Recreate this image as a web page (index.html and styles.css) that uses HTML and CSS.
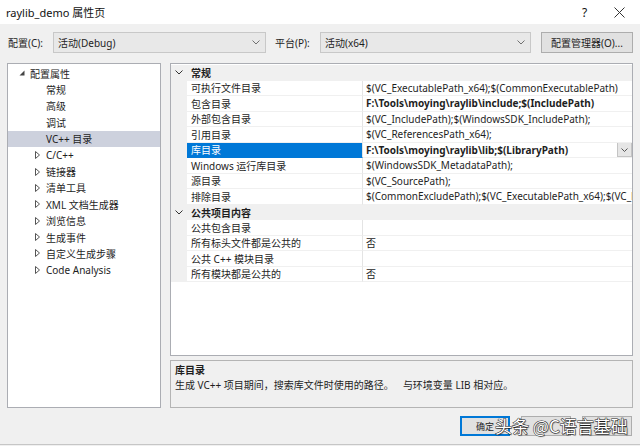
FILE: index.html
```html
<!DOCTYPE html>
<html lang="zh-CN">
<head>
<meta charset="utf-8">
<title>raylib_demo 属性页</title>
<link rel="stylesheet" href="styles.css">
</head>
<body>
<div class="window">
  <div class="titlebar">
    <span class="title">raylib_demo 属性页</span>
    <span class="tb-help">?</span>
    <span class="tb-close"><svg width="11" height="11" viewBox="0 0 11 11"><path d="M0.5 0.5L10.5 10.5M10.5 0.5L0.5 10.5" stroke="#333" stroke-width="1" fill="none"/></svg></span>
  </div>

  <div class="toolbar">
    <span class="lbl lbl-config">配置(C):</span>
    <div class="combo combo-config"><span class="combo-text">活动(Debug)</span><svg class="chev" width="8" height="5" viewBox="0 0 8 5"><path d="M0.5 0.5L4 4L7.5 0.5" stroke="#707070" fill="none"/></svg></div>
    <span class="lbl lbl-platform">平台(P):</span>
    <div class="combo combo-platform"><span class="combo-text">活动(x64)</span><svg class="chev" width="8" height="5" viewBox="0 0 8 5"><path d="M0.5 0.5L4 4L7.5 0.5" stroke="#707070" fill="none"/></svg></div>
    <div class="btn btn-manager">配置管理器(O)...</div>
  </div>

  <div class="main">
    <div class="tree">
      <div class="node root"><svg class="tw" width="6" height="6" viewBox="0 0 6 6"><polygon points="5.5,0.5 5.5,5.5 0.5,5.5" fill="#444"/></svg><span>配置属性</span></div>
      <div class="node leaf">常规</div>
      <div class="node leaf">高级</div>
      <div class="node leaf">调试</div>
      <div class="node leaf selected">VC++ 目录</div>
      <div class="node branch"><svg class="tw" width="5" height="8" viewBox="0 0 5 8"><polygon points="0.5,0.5 4.5,4 0.5,7.5" fill="none" stroke="#555"/></svg><span>C/C++</span></div>
      <div class="node branch"><svg class="tw" width="5" height="8" viewBox="0 0 5 8"><polygon points="0.5,0.5 4.5,4 0.5,7.5" fill="none" stroke="#555"/></svg><span>链接器</span></div>
      <div class="node branch"><svg class="tw" width="5" height="8" viewBox="0 0 5 8"><polygon points="0.5,0.5 4.5,4 0.5,7.5" fill="none" stroke="#555"/></svg><span>清单工具</span></div>
      <div class="node branch"><svg class="tw" width="5" height="8" viewBox="0 0 5 8"><polygon points="0.5,0.5 4.5,4 0.5,7.5" fill="none" stroke="#555"/></svg><span>XML 文档生成器</span></div>
      <div class="node branch"><svg class="tw" width="5" height="8" viewBox="0 0 5 8"><polygon points="0.5,0.5 4.5,4 0.5,7.5" fill="none" stroke="#555"/></svg><span>浏览信息</span></div>
      <div class="node branch"><svg class="tw" width="5" height="8" viewBox="0 0 5 8"><polygon points="0.5,0.5 4.5,4 0.5,7.5" fill="none" stroke="#555"/></svg><span>生成事件</span></div>
      <div class="node branch"><svg class="tw" width="5" height="8" viewBox="0 0 5 8"><polygon points="0.5,0.5 4.5,4 0.5,7.5" fill="none" stroke="#555"/></svg><span>自定义生成步骤</span></div>
      <div class="node branch"><svg class="tw" width="5" height="8" viewBox="0 0 5 8"><polygon points="0.5,0.5 4.5,4 0.5,7.5" fill="none" stroke="#555"/></svg><span>Code Analysis</span></div>
    </div>

    <div class="right">
      <div class="grid">
        <div class="cat"><span class="gut"><svg width="8" height="5" viewBox="0 0 8 5"><path d="M0.5 0.5L4 4L7.5 0.5" stroke="#333" fill="none"/></svg></span><span class="cat-name">常规</span></div>
        <div class="row"><span class="gut"></span><span class="name">可执行文件目录</span><span class="val"><span class="vt">$(VC_ExecutablePath_x64);$(CommonExecutablePath)</span></span></div>
        <div class="row"><span class="gut"></span><span class="name">包含目录</span><span class="val bold"><span class="vt">F:\Tools\moying\raylib\include;$(IncludePath)</span></span></div>
        <div class="row"><span class="gut"></span><span class="name">外部包含目录</span><span class="val"><span class="vt">$(VC_IncludePath);$(WindowsSDK_IncludePath);</span></span></div>
        <div class="row"><span class="gut"></span><span class="name">引用目录</span><span class="val"><span class="vt">$(VC_ReferencesPath_x64);</span></span></div>
        <div class="row sel"><span class="gut"></span><span class="name">库目录</span><span class="val bold"><span class="vt">F:\Tools\moying\raylib\lib;$(LibraryPath)</span><span class="dd"><svg width="7" height="4" viewBox="0 0 7 4"><path d="M0.5 0.5L3.5 3.5L6.5 0.5" stroke="#555" fill="none"/></svg></span></span></div>
        <div class="row"><span class="gut"></span><span class="name">Windows 运行库目录</span><span class="val"><span class="vt">$(WindowsSDK_MetadataPath);</span></span></div>
        <div class="row"><span class="gut"></span><span class="name">源目录</span><span class="val"><span class="vt">$(VC_SourcePath);</span></span></div>
        <div class="row"><span class="gut"></span><span class="name">排除目录</span><span class="val"><span class="vt">$(CommonExcludePath);$(VC_ExecutablePath_x64);$(VC_LibraryPath_x64);</span></span></div>
        <div class="cat"><span class="gut"><svg width="8" height="5" viewBox="0 0 8 5"><path d="M0.5 0.5L4 4L7.5 0.5" stroke="#333" fill="none"/></svg></span><span class="cat-name">公共项目内容</span></div>
        <div class="row"><span class="gut"></span><span class="name">公共包含目录</span><span class="val"><span class="vt"></span></span></div>
        <div class="row"><span class="gut"></span><span class="name">所有标头文件都是公共的</span><span class="val"><span class="vt">否</span></span></div>
        <div class="row"><span class="gut"></span><span class="name">公共 C++ 模块目录</span><span class="val"><span class="vt"></span></span></div>
        <div class="row"><span class="gut"></span><span class="name">所有模块都是公共的</span><span class="val"><span class="vt">否</span></span></div>
      </div>
      <div class="desc">
        <div class="desc-title">库目录</div>
        <div class="desc-text">生成 VC++ 项目期间，搜索库文件时使用的路径。<span class="gap"></span>与环境变量 LIB 相对应。</div>
      </div>
    </div>
  </div>

  <div class="buttons">
    <div class="btn btn-ok">确定</div>
    <div class="btn"></div>
    <div class="btn"></div>
    <div class="watermark">头条 @C语言基础</div>
  </div>
</div>
</body>
</html>
```

FILE: styles.css
```css
* { box-sizing: border-box; }
html, body { margin: 0; padding: 0; }
body {
  width: 640px;
  height: 446px;
  overflow: hidden;
  background: #f0f0f0;
  font-family: "Noto Sans", "Noto Sans CJK SC", sans-serif;
  font-size: 10px;
  color: #1e1e1e;
}
.window {
  height: 445px;
  display: flex;
  flex-direction: column;
  border-bottom: 1px solid #c6c6c6;
}

/* title bar */
.titlebar {
  height: 24px;
  background: #fff;
  display: flex;
  align-items: center;
  padding-left: 6px;
  font-size: 11px;
  color: #111;
}
.title { flex: 1; }
.tb-help { width: 8px; margin-right: 24px; font-size: 12px; }
.tb-close { width: 11px; margin-right: 15px; display: flex; }

/* toolbar */
.toolbar {
  margin-top: 8px;
  height: 21px;
  display: flex;
  align-items: center;
  padding-left: 8px;
}
.lbl { white-space: nowrap; }
.lbl-config { width: 45px; }
.lbl-platform { width: 45px; margin-left: 9px; }
.combo {
  height: 21px;
  background: #e8e8e8;
  border: 1px solid #c8c8c8;
  display: flex;
  align-items: center;
  padding: 0 5px 0 4px;
}
.combo-text { flex: 1; }
.combo-config { width: 213px; }
.combo-platform { width: 211px; }
.btn {
  height: 20px;
  background: #e1e1e1;
  border: 1px solid #adadad;
  display: flex;
  align-items: center;
  justify-content: center;
  white-space: nowrap;
}
.btn-manager { width: 92px; height: 21px; margin-left: 10px; }

/* main */
.main {
  margin-top: 10px;
  height: 345px;
  display: flex;
  padding-left: 7px;
}
.tree {
  width: 154px;
  background: #fff;
  border: 1px solid #abadb3;
  padding-top: 1px;
}
.node {
  height: 16.4px;
  display: flex;
  align-items: center;
  white-space: nowrap;
}
.node.root { padding-left: 11px; }
.node.root .tw { margin-right: 5px; }
.node.leaf { padding-left: 38px; }
.node.branch { padding-left: 27px; }
.node.branch .tw { margin-right: 6px; }
.node.selected { background: #cdd1dd; }

.right {
  margin-left: 9px;
  width: 463px;
  display: flex;
  flex-direction: column;
}
.grid {
  height: 293px;
  background: #fff;
  border: 1px solid #abadb3;
  padding-top: 1px;
  overflow: hidden;
}
.cat, .row {
  height: 15.5px;
  display: grid;
  grid-template-columns: 16px 176px 1fr;
  white-space: nowrap;
}
.cat { background: #f0f0f0; }
.gut {
  background: #f0f0f0;
  display: flex;
  align-items: center;
  justify-content: center;
}
.cat-name {
  grid-column: 2 / 4;
  font-weight: bold;
  padding-left: 4px;
  display: flex;
  align-items: center;
}
.name {
  padding-left: 4px;
  display: flex;
  align-items: center;
  border-bottom: 1px solid #f0f0f0;
  border-right: 1px solid #e4e4e4;
  overflow: hidden;
}
.val {
  display: flex;
  align-items: center;
  border-bottom: 1px solid #f0f0f0;
  overflow: hidden;
}
.vt {
  flex: 1;
  padding-left: 3px;
  overflow: hidden;
}
.val.bold { font-weight: bold; }
.row.sel .name {
  background: #0078d7;
  color: #fff;
  border-bottom-color: #0078d7;
}
.dd {
  width: 15px;
  height: 15px;
  flex: none;
  background: #e6e6e6;
  border: 1px solid #c4c4c4;
  display: flex;
  align-items: center;
  justify-content: center;
}

.desc {
  margin-top: 4px;
  height: 48px;
  border: 1px solid #b4b4b4;
  padding: 2px 4px 0 4px;
  line-height: 15px;
}
.desc-title { font-weight: bold; }
.desc-text { white-space: nowrap; }
.gap { display: inline-block; width: 9px; }

/* buttons */
.buttons {
  position: relative;
  margin-top: 8px;
  height: 20px;
  display: flex;
  justify-content: flex-end;
  gap: 11px;
  padding-right: 8px;
}
.buttons .btn { width: 50px; font-size: 9px; }
.btn-ok { border: 1px solid #0078d7; box-shadow: inset 0 0 0 1px #0078d7; }
.watermark {
  position: absolute;
  left: 495px;
  top: -3px;
  font-family: "Noto Sans CJK SC", sans-serif;
  font-size: 17px;
  color: #fff;
  white-space: nowrap;
  -webkit-text-stroke: 1px #262626;
  paint-order: stroke fill;
  text-shadow: 1px 1px 1px rgba(0,0,0,0.4);
}
```
